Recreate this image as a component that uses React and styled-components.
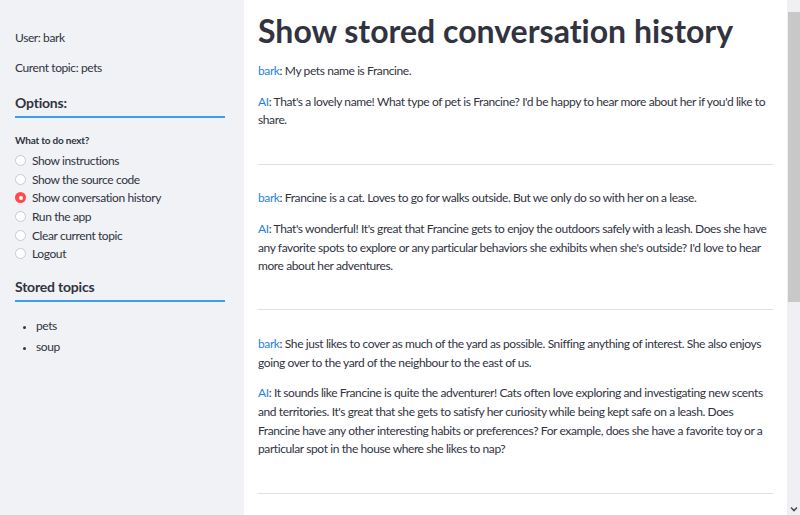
import React from "react";
import styled, { createGlobalStyle } from "styled-components";

const GlobalStyle = createGlobalStyle`
  html, body {
    margin: 0;
    padding: 0;
    height: 100%;
    overflow: hidden;
  }
  body {
    font-family: Lato, "Open Sans", sans-serif;
    color: #31333f;
    font-variant-ligatures: none;
    -webkit-font-smoothing: antialiased;
  }
`;

const options = [
  "Show instructions",
  "Show the source code",
  "Show conversation history",
  "Run the app",
  "Clear current topic",
  "Logout",
];

const topics = ["pets", "soup"];

const history = [
  {
    user: "My pets name is Francine.",
    ai: "That's a lovely name! What type of pet is Francine? I'd be happy to hear more about her if you'd like to share.",
  },
  {
    user: "Francine is a cat. Loves to go for walks outside. But we only do so with her on a lease.",
    ai: "That's wonderful! It's great that Francine gets to enjoy the outdoors safely with a leash. Does she have any favorite spots to explore or any particular behaviors she exhibits when she's outside? I'd love to hear more about her adventures.",
  },
  {
    user: "She just likes to cover as much of the yard as possible. Sniffing anything of interest. She also enjoys going over to the yard of the neighbour to the east of us.",
    ai: "It sounds like Francine is quite the adventurer! Cats often love exploring and investigating new scents and territories. It's great that she gets to satisfy her curiosity while being kept safe on a leash. Does Francine have any other interesting habits or preferences? For example, does she have a favorite toy or a particular spot in the house where she likes to nap?",
  },
];

const App = () => {
  return (
    <Page>
      <GlobalStyle />
      <Sidebar>
        <Info>User: bark</Info>
        <Info>Curent topic: pets</Info>
        <SectionTitle $gap={17}>Options:</SectionTitle>
        <RadioLabel>What to do next?</RadioLabel>
        <RadioGroup>
          {options.map((o) => (
            <RadioRow key={o}>
              <RadioDot $checked={o === "Show conversation history"} />
              {o}
            </RadioRow>
          ))}
        </RadioGroup>
        <SectionTitle $gap={14}>Stored topics</SectionTitle>
        <TopicList>
          {topics.map((t) => (
            <Topic key={t}>{t}</Topic>
          ))}
        </TopicList>
      </Sidebar>
      <Main>
        <Content>
          <Title>Show stored conversation history</Title>
          {history.map((h, i) => (
            <Exchange key={i}>
              <Message>
                <Speaker>bark</Speaker>: {h.user}
              </Message>
              <Message>
                <Speaker>AI</Speaker>: {h.ai}
              </Message>
              <Divider />
            </Exchange>
          ))}
        </Content>
        <ScrollTrack>
          <ScrollButton />
          <ScrollThumb />
          <ScrollRest />
          <ScrollButton>
            <svg width="8" height="6" viewBox="0 0 8 6">
              <path d="M1 1.5 L4 4.5 L7 1.5" fill="none" stroke="#505050" strokeWidth="1.6" />
            </svg>
          </ScrollButton>
        </ScrollTrack>
      </Main>
    </Page>
  );
};

const Page = styled.div`
  display: flex;
  height: 100vh;
  width: 100vw;
  overflow: hidden;
`;

const Sidebar = styled.aside`
  width: 244px;
  flex-shrink: 0;
  box-sizing: border-box;
  background: #f0f2f6;
  padding: 29px 19px 0 15px;
  font-size: 12px;
  letter-spacing: -0.4px;
`;

const Info = styled.p`
  margin: 0 0 13px;
  line-height: 17px;
`;

const SectionTitle = styled.h3`
  margin: ${(p) => p.$gap}px 0 0;
  padding-bottom: 2.5px;
  font-size: 14px;
  font-weight: 700;
  line-height: 20px;
  letter-spacing: -0.2px;
  border-bottom: 2px solid #3a9ff0;
`;

const RadioLabel = styled.div`
  margin-top: 14.5px;
  font-size: 10px;
  font-weight: 700;
  line-height: 16px;
  letter-spacing: -0.2px;
`;

const RadioGroup = styled.div`
  display: flex;
  flex-direction: column;
  margin-top: 3px;
`;

const RadioRow = styled.label`
  display: flex;
  align-items: center;
  gap: 6px;
  height: 18.7px;
  font-size: 12px;
`;

const RadioDot = styled.span`
  width: 11px;
  height: 11px;
  border-radius: 50%;
  box-sizing: border-box;
  background: ${(p) => (p.$checked ? "#ff4b4b" : "#fff")};
  border: ${(p) => (p.$checked ? "none" : "1px solid #c9c9d1")};
  display: flex;
  align-items: center;
  justify-content: center;
  &::after {
    content: "";
    width: 4px;
    height: 4px;
    border-radius: 50%;
    background: #fff;
    display: ${(p) => (p.$checked ? "block" : "none")};
  }
`;

const TopicList = styled.ul`
  margin: 13px 0 0;
  padding-left: 21px;
  font-size: 12px;
`;

const Topic = styled.li`
  line-height: 21px;
  &::marker {
    font-size: 10px;
  }
`;

const Main = styled.main`
  flex: 1;
  display: flex;
  height: 100vh;
  min-width: 0;
  background: #fff;
`;

const Content = styled.div`
  flex: 1;
  min-width: 0;
  overflow: hidden;
  padding: 0 14px;
  font-size: 12px;
  letter-spacing: -0.4px;
`;

const Title = styled.h1`
  margin: 0;
  padding: 12px 0 12px;
  font-size: 32px;
  font-weight: 700;
  line-height: 38px;
  letter-spacing: 0;
  color: #31333f;
`;

const Exchange = styled.section`
  margin-bottom: 24.5px;
`;

const Message = styled.p`
  margin: 0 0 12px;
  line-height: 18.7px;
`;

const Speaker = styled.span`
  color: #1c83e1;
`;

const Divider = styled.hr`
  margin: 33.5px 0 0;
  border: none;
  border-top: 1px solid #dedee4;
`;

const ScrollTrack = styled.div`
  width: 13px;
  flex-shrink: 0;
  display: flex;
  flex-direction: column;
  background: #f0f0f4;
`;

const ScrollButton = styled.div`
  height: 12px;
  display: flex;
  align-items: center;
  justify-content: center;
`;

const ScrollThumb = styled.div`
  height: 290px;
  margin-left: 1px;
  background: #c8c8c8;
`;

const ScrollRest = styled.div`
  flex: 1;
`;

export default App;
